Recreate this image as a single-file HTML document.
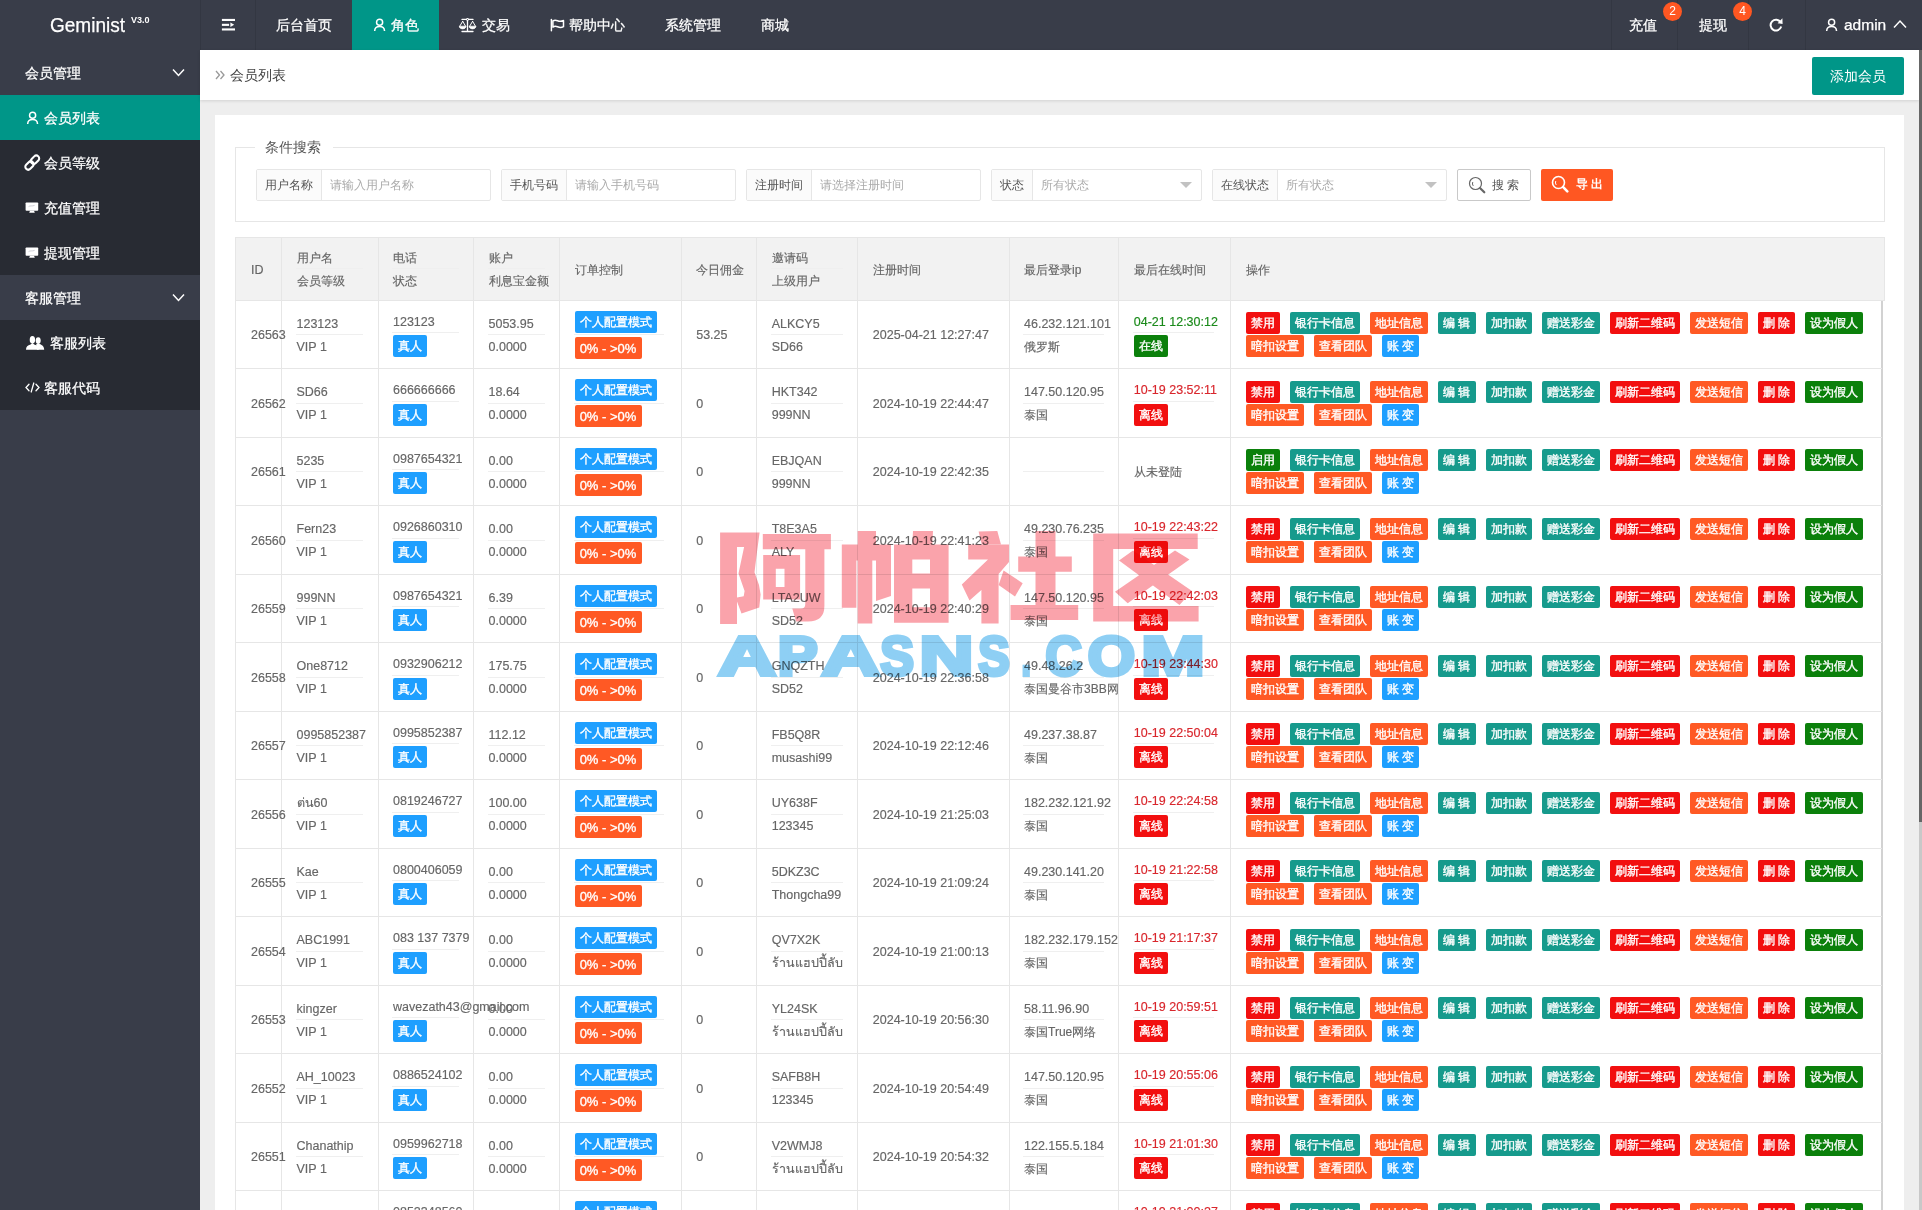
<!DOCTYPE html><html><head><meta charset="utf-8"><title>会员列表</title><style>
*{box-sizing:border-box;margin:0;padding:0}
html,body{width:1922px;height:1210px;overflow:hidden}
body{position:relative;background:#eeeeee;font-family:"Liberation Sans",sans-serif;font-size:12px;color:#666;line-height:20px}
.abs{position:absolute}
.nw{white-space:nowrap;overflow:visible}
#hdr{position:absolute;left:0;top:0;width:1922px;height:50px;background:#393D49;color:#fff}
#hdr .it{-webkit-text-stroke:.25px #fff;position:absolute;top:0;height:50px;line-height:50px;font-size:14px;color:#fff;white-space:nowrap}
#hdr .sep{position:absolute;top:0;width:1px;height:50px;background:rgba(0,0,0,.09)}
#side{position:absolute;left:0;top:50px;width:200px;height:1160px;background:#393D49}
#side .p{-webkit-text-stroke:.25px #fff;position:absolute;left:0;width:200px;height:45px;line-height:46px;color:#fff;font-size:14px;padding-left:25px;background:#393D49;white-space:nowrap}
#side .c{-webkit-text-stroke:.25px #fff;position:absolute;left:0;width:200px;height:45px;line-height:46px;color:#fff;font-size:14px;background:#282B33;white-space:nowrap}
#side .c span{position:absolute;top:0}
#side .act{background:#009688}
#side svg{position:absolute}
#crumb{position:absolute;left:200px;top:50px;width:1719px;height:50px;background:#fff;box-shadow:0 1px 3px rgba(0,0,0,.12)}
#card{position:absolute;left:215px;top:115px;width:1689px;height:1100px;background:#fff}
.grp{position:absolute;top:169px;height:32px;border:1px solid #e6e6e6;border-radius:2px;background:#fff}
.grp .lb{position:absolute;left:0;top:0;height:30px;line-height:31px;background:#FBFBFB;border-right:1px solid #e6e6e6;color:#555;font-size:12px;text-align:center;white-space:nowrap;overflow:hidden}
.grp .ph{position:absolute;top:0;height:30px;line-height:31px;color:#ababab;font-size:12px;white-space:nowrap}
.grp .car{position:absolute;top:12px;width:0;height:0;border:6px solid transparent;border-top-color:#c2c2c2}
#thead{position:absolute;left:235px;top:237px;width:1650px;height:64px;background:#f2f2f2;border:1px solid #e6e6e6}
.vl{position:absolute;width:1px;background:#e6e6e6}
.hl{position:absolute;height:1px;background:#e6e6e6}
.t{position:absolute;height:20px;line-height:20px;white-space:nowrap;color:#666;-webkit-text-stroke:.15px currentColor}
.n{font-size:12.5px}
.hr{position:absolute;height:1px;background:#efefef}
.b{position:absolute;height:22px;line-height:23px;-webkit-text-stroke:.35px #fff;border-radius:2px;color:#fff;font-size:12px;text-align:center;white-space:nowrap;overflow:hidden}
.red{background:#F20F0F}.teal{background:#169A8C}.org{background:#FF5924}.blue{background:#1E9FFF}.grn{background:#0B800B}
.tg{color:#1a8a1a}.tr{color:#d9262c}
</style></head><body>
<div id="hdr">
<div class="it" style="left:50px;font-size:20px;transform:scaleX(.95);transform-origin:0 50%">Geminist</div>
<div class="abs" style="left:131px;top:14px;font-size:9px;line-height:12px;font-weight:bold;color:#fff">V3.0</div>
<div class="sep" style="left:200px"></div>
<div class="sep" style="left:255px"></div>
<div class="sep" style="left:1611px"></div>
<div class="sep" style="left:1677px"></div>
<div class="sep" style="left:1748px"></div>
<div class="sep" style="left:1805px"></div>
<svg class="abs" style="left:221px;top:18px" width="15" height="13" viewBox="0 0 15 13"><g fill="#fff"><rect x="0.9" y="0.9" width="13.1" height="2.1"/><rect x="0.9" y="5.8" width="7.2" height="2.1"/><rect x="0.9" y="10.4" width="13.1" height="2.1"/><path d="M9.4 4.6L13.2 6.85L9.4 9.1Z"/></g></svg>
<div class="it" style="left:276px">后台首页</div>
<div class="abs" style="left:352px;top:0;width:87px;height:50px;background:#009688"></div>
<svg class="abs" style="left:372.5px;top:17px" width="13" height="14" viewBox="0 0 13 14"><g stroke="#fff" stroke-width="1.5" fill="none" stroke-linecap="round"><circle cx="6.6" cy="5.3" r="3.05"/><path d="M1.7 13.6C1.9 10.8 3.9 9.6 6.6 9.6S11.3 10.8 11.5 13.6"/></g></svg>
<div class="it" style="left:391px">角色</div>
<svg class="abs" style="left:458px;top:18px" width="19" height="15" viewBox="0 0 19 15"><g stroke="#fff" fill="none" stroke-linecap="round" stroke-linejoin="miter"><path d="M4 1.4H15M9.5 1.4V13.5M4 13.5H15" stroke-width="1.3"/><path d="M4.7 3.3L1.7 8.3M4.7 3.3L7.6 8.3M14.6 3.3L11.6 8.3M14.6 3.3L17.5 8.3" stroke-width="1"/><path d="M1.4 8.7C1.8 11.6 7.5 11.6 7.9 8.7ZM11.3 8.7C11.7 11.6 17.4 11.6 17.8 8.7Z" stroke-width="1" fill="#fff"/></g><circle cx="9.5" cy="1.4" r="1.3" fill="#fff"/><circle cx="9.5" cy="1.4" r="0.5" fill="#393D49"/></svg>
<div class="it" style="left:482px">交易</div>
<svg class="abs" style="left:549px;top:17px" width="17" height="16" viewBox="0 0 17 16"><g stroke="#fff" stroke-width="1.5" fill="none" stroke-linejoin="round" stroke-linecap="round"><path d="M2.4 2.6V13.8"/><path d="M3.9 3.9C5.6 2.7 7 3 8.6 3.7S12.2 4.6 14.5 3.5V9.7C12.2 10.9 10.2 10.5 8.6 9.8S5.6 8.9 3.9 10.1Z"/></g></svg>
<div class="it" style="left:569px">帮助中心</div>
<div class="it" style="left:665px">系统管理</div>
<div class="it" style="left:761px">商城</div>
<div class="it" style="left:1629px">充值</div>
<div class="abs" style="left:1663px;top:2px;width:19px;height:19px;border-radius:10px;background:#FF5722;color:#fff;font-size:12px;line-height:19px;text-align:center">2</div>
<div class="it" style="left:1699px">提现</div>
<div class="abs" style="left:1733px;top:2px;width:19px;height:19px;border-radius:10px;background:#FF5722;color:#fff;font-size:12px;line-height:19px;text-align:center">4</div>
<svg class="abs" style="left:1768px;top:17px" width="16" height="16" viewBox="0 0 16 16"><path d="M12.6 5.3A5.4 5.4 0 1 0 13.2 9.6" stroke="#fff" stroke-width="2" fill="none"/><path d="M9.6 6.2L14.4 1.2L14.6 7.1Z" fill="#fff"/></svg>
<svg class="abs" style="left:1825.3px;top:17px" width="13" height="14" viewBox="0 0 13 14"><g stroke="#fff" stroke-width="1.5" fill="none" stroke-linecap="round"><circle cx="6.6" cy="5.3" r="3.05"/><path d="M1.7 13.6C1.9 10.8 3.9 9.6 6.6 9.6S11.3 10.8 11.5 13.6"/></g></svg>
<div class="it" style="left:1844px;font-size:15.5px">admin</div>
<svg class="abs" style="left:1893px;top:19px" width="14" height="10" viewBox="0 0 14 10"><path d="M1 8.5L7 2L13 8.5" stroke="#fff" stroke-width="1.5" fill="none"/></svg>
</div>
<div id="side">
<div class="p" style="top:0">会员管理<svg style="left:172px;top:18px" width="13" height="9" viewBox="0 0 13 9"><path d="M1 1.5L6.5 7.5L12 1.5" stroke="#fff" stroke-width="1.5" fill="none"/></svg></div>
<div class="c act" style="top:45px"><svg style="left:25.5px;top:15px" width="13" height="14" viewBox="0 0 13 14"><g stroke="#fff" stroke-width="1.5" fill="none" stroke-linecap="round"><circle cx="6.6" cy="5.3" r="3.05"/><path d="M1.7 13.6C1.9 10.8 3.9 9.6 6.6 9.6S11.3 10.8 11.5 13.6"/></g></svg><span style="left:44px">会员列表</span></div>
<div class="c" style="top:90px"><svg style="left:22px;top:12px" width="20" height="20" viewBox="22 12 20 20"><g stroke="#fff" stroke-width="2.1" fill="none"><rect x="-4.7" y="-2.9" width="9.4" height="5.8" rx="2.9" transform="translate(35,19.7) rotate(-45)"/><rect x="-4.7" y="-2.9" width="9.4" height="5.8" rx="2.9" transform="translate(29.5,25.5) rotate(-45)"/></g></svg><span style="left:44px">会员等级</span></div>
<div class="c" style="top:135px"><svg style="left:25px;top:17px" width="14" height="13" viewBox="0 0 14 13"><rect x="0.6" y="0.4" width="12.6" height="8.3" rx="0.8" fill="#fff"/><path d="M3.6 4.6C5 3.4 7 4.4 9.6 3.4" stroke="#c9cad0" stroke-width="0.9" fill="none"/><path d="M5 8.7H9L9.8 10.8H4.2Z" fill="#fff"/></svg><span style="left:44px">充值管理</span></div>
<div class="c" style="top:180px"><svg style="left:25px;top:17px" width="14" height="13" viewBox="0 0 14 13"><rect x="0.6" y="0.4" width="12.6" height="8.3" rx="0.8" fill="#fff"/><path d="M3.6 4.6C5 3.4 7 4.4 9.6 3.4" stroke="#c9cad0" stroke-width="0.9" fill="none"/><path d="M5 8.7H9L9.8 10.8H4.2Z" fill="#fff"/></svg><span style="left:44px">提现管理</span></div>
<div class="p" style="top:225px">客服管理<svg style="left:172px;top:18px" width="13" height="9" viewBox="0 0 13 9"><path d="M1 1.5L6.5 7.5L12 1.5" stroke="#fff" stroke-width="1.5" fill="none"/></svg></div>
<div class="c" style="top:270px"><svg style="left:25px;top:15px" width="20" height="16" viewBox="0 0 20 16"><g fill="#fff"><ellipse cx="13.2" cy="5.6" rx="2.5" ry="3.4"/><path d="M11 9.6L13.2 8.6C16.5 9.6 19 11 19.2 14.8H12Z"/><ellipse cx="7.4" cy="4.8" rx="2.7" ry="3.8"/><path d="M1 14.8C1 11.6 2.6 10.6 5.6 9.6L7.4 8L9.2 9.6C12.2 10.6 13.8 11.6 13.8 14.8Z"/></g></svg><span style="left:50px">客服列表</span></div>
<div class="c" style="top:315px"><svg style="left:25px;top:17px" width="15" height="11" viewBox="0 0 15 11"><g stroke="#fff" stroke-width="1.3" fill="none" stroke-linecap="round" stroke-linejoin="miter"><path d="M4 2.2L1 5.5L4 8.8M11 2.2L14 5.5L11 8.8M8.8 1L6.2 10"/></g></svg><span style="left:44px">客服代码</span></div>
</div>
<div id="crumb">
<svg class="abs" style="left:15px;top:20px" width="10" height="10" viewBox="0 0 10 10"><path d="M1 1L4.5 5L1 9M5.5 1L9 5L5.5 9" stroke="#999" stroke-width="1.3" fill="none"/></svg>
<div class="abs nw" style="left:30px;top:0;line-height:50px;font-size:14px;color:#444">会员列表</div>
<div class="abs" style="left:1612px;top:7px;width:92px;height:38px;line-height:38px;background:#009688;border-radius:2px;color:#fff;font-size:14px;text-align:center;white-space:nowrap;overflow:hidden">添加会员</div>
</div>
<div class="abs" style="left:1919px;top:50px;width:3px;height:772px;background:#666"></div><div class="abs" style="left:1919px;top:822px;width:3px;height:388px;background:#c8c8c8"></div>
<div id="card"></div>
<div class="abs" style="left:235px;top:147px;width:1650px;height:75px;border:1px solid #e6e6e6"></div>
<div class="abs nw" style="left:255px;top:137px;width:78px;height:20px;background:#fff;line-height:20px;font-size:14px;color:#555;padding-left:10px">条件搜索</div>
<div class="grp" style="left:256px;width:235px"><div class="lb" style="width:65px">用户名称</div><div class="ph" style="left:73px">请输入用户名称</div></div>
<div class="grp" style="left:501px;width:235px"><div class="lb" style="width:65px">手机号码</div><div class="ph" style="left:73px">请输入手机号码</div></div>
<div class="grp" style="left:746px;width:235px"><div class="lb" style="width:65px">注册时间</div><div class="ph" style="left:73px">请选择注册时间</div></div>
<div class="grp" style="left:991px;width:211px"><div class="lb" style="width:41px">状态</div><div class="ph" style="left:49px">所有状态</div><div class="car" style="left:188px"></div></div>
<div class="grp" style="left:1212px;width:235px"><div class="lb" style="width:65px">在线状态</div><div class="ph" style="left:73px">所有状态</div><div class="car" style="left:212px"></div></div>
<div class="abs" style="left:1457px;top:169px;width:74px;height:32px;border:1px solid #C9C9C9;border-radius:2px;background:#fff"></div>
<svg class="abs" style="left:1468px;top:176px" width="18" height="18" viewBox="0 0 18 18"><g stroke="#666" fill="none" stroke-linecap="round"><circle cx="7.5" cy="7.5" r="6" stroke-width="1.2"/><path d="M4.6 6.4A3.2 3.2 0 0 0 5 9.6" stroke-width="1"/><path d="M12.2 12.2L16.3 16.3" stroke-width="2.2"/></g></svg>
<div class="abs nw" style="left:1492px;top:169px;line-height:32px;font-size:12px;color:#555">搜 索</div>
<div class="abs" style="left:1541px;top:169px;width:72px;height:32px;border-radius:2px;background:#FF5722"></div>
<svg class="abs" style="left:1551px;top:175px" width="18" height="18" viewBox="0 0 18 18"><g stroke="#fff" fill="none" stroke-linecap="round"><circle cx="7.5" cy="7.5" r="6" stroke-width="1.6"/><path d="M4.6 6.4A3.2 3.2 0 0 0 5 9.6" stroke-width="1"/><path d="M12.2 12.2L16.3 16.3" stroke-width="2.6"/></g></svg>
<div class="abs nw" style="left:1576px;top:168px;line-height:32px;font-size:12px;color:#fff;font-weight:bold">导 出</div>
<div id="thead"></div>
<div class="vl" style="left:235px;top:301px;height:910px"></div>
<div class="vl" style="left:281.00px;top:238px;height:973px"></div>
<div class="vl" style="left:377.50px;top:238px;height:973px"></div>
<div class="vl" style="left:473.00px;top:238px;height:973px"></div>
<div class="vl" style="left:559.00px;top:238px;height:973px"></div>
<div class="vl" style="left:680.70px;top:238px;height:973px"></div>
<div class="vl" style="left:756.20px;top:238px;height:973px"></div>
<div class="vl" style="left:857.30px;top:238px;height:973px"></div>
<div class="vl" style="left:1008.50px;top:238px;height:973px"></div>
<div class="vl" style="left:1118.30px;top:238px;height:973px"></div>
<div class="vl" style="left:1230.00px;top:238px;height:973px"></div>
<div class="abs" style="left:1881px;top:301px;width:2px;height:910px;background:#d2d2d2"></div>
<div class="hl" style="left:235px;top:368.26px;width:1647px"></div>
<div class="hl" style="left:235px;top:436.77px;width:1647px"></div>
<div class="hl" style="left:235px;top:505.28px;width:1647px"></div>
<div class="hl" style="left:235px;top:573.79px;width:1647px"></div>
<div class="hl" style="left:235px;top:642.30px;width:1647px"></div>
<div class="hl" style="left:235px;top:710.81px;width:1647px"></div>
<div class="hl" style="left:235px;top:779.32px;width:1647px"></div>
<div class="hl" style="left:235px;top:847.83px;width:1647px"></div>
<div class="hl" style="left:235px;top:916.34px;width:1647px"></div>
<div class="hl" style="left:235px;top:984.85px;width:1647px"></div>
<div class="hl" style="left:235px;top:1053.36px;width:1647px"></div>
<div class="hl" style="left:235px;top:1121.87px;width:1647px"></div>
<div class="hl" style="left:235px;top:1190.38px;width:1647px"></div>
<div class="t n" style="left:251.0px;top:259.9px;">ID</div>
<div class="t " style="left:296.5px;top:247.6px;">用户名</div>
<div class="t " style="left:296.5px;top:270.9px;">会员等级</div>
<div class="hr" style="left:295.5px;top:268.2px;width:67.5px"></div>
<div class="t " style="left:393.0px;top:247.6px;">电话</div>
<div class="t " style="left:393.0px;top:270.9px;">状态</div>
<div class="hr" style="left:392.0px;top:268.2px;width:66.5px"></div>
<div class="t " style="left:488.5px;top:247.6px;">账户</div>
<div class="t " style="left:488.5px;top:270.9px;">利息宝金额</div>
<div class="hr" style="left:487.5px;top:268.2px;width:57.0px"></div>
<div class="t " style="left:771.7px;top:247.6px;">邀请码</div>
<div class="t " style="left:771.7px;top:270.9px;">上级用户</div>
<div class="hr" style="left:770.7px;top:268.2px;width:72.1px"></div>
<div class="t " style="left:574.5px;top:259.9px;">订单控制</div>
<div class="t " style="left:696.2px;top:259.9px;">今日佣金</div>
<div class="t " style="left:872.8px;top:259.9px;">注册时间</div>
<div class="t " style="left:1024.0px;top:259.9px;">最后登录ip</div>
<div class="t " style="left:1133.8px;top:259.9px;">最后在线时间</div>
<div class="t " style="left:1245.5px;top:259.9px;">操作</div>
<div class="t n" style="left:251.0px;top:325.3px;">26563</div>
<div class="t n" style="left:296.5px;top:313.7px;">123123</div>
<div class="hr" style="left:295.5px;top:334.1px;width:67.0px"></div>
<div class="t n" style="left:296.5px;top:336.7px;">VIP 1</div>
<div class="t n" style="left:393.0px;top:311.8px;">123123</div>
<div class="hr" style="left:392.0px;top:332.1px;width:67.0px"></div>
<div class="b blue" style="left:393.0px;top:335.3px;width:34.0px;">真人</div>
<div class="t n" style="left:488.5px;top:313.7px;">5053.95</div>
<div class="hr" style="left:487.5px;top:334.1px;width:57.0px"></div>
<div class="t n" style="left:488.5px;top:336.7px;">0.0000</div>
<div class="b blue" style="left:574.5px;top:310.5px;width:82.0px;">个人配置模式</div>
<div class="hr" style="left:573.5px;top:334.2px;width:90.0px"></div>
<div class="b org" style="left:574.5px;top:336.7px;width:67.0px;font-size:13px">0% - &gt;0%</div>
<div class="t n" style="left:696.2px;top:325.3px;">53.25</div>
<div class="t n" style="left:771.7px;top:313.7px;">ALKCY5</div>
<div class="hr" style="left:770.7px;top:334.1px;width:72.0px"></div>
<div class="t n" style="left:771.7px;top:336.7px;max-width:84px;overflow:hidden">SD66</div>
<div class="t n" style="left:872.8px;top:325.3px;">2025-04-21 12:27:47</div>
<div class="t n" style="left:1024.0px;top:313.7px;">46.232.121.101</div>
<div class="hr" style="left:1023.0px;top:334.1px;width:81.0px"></div>
<div class="t " style="left:1024.0px;top:336.7px;">俄罗斯</div>
<div class="t n tg" style="left:1133.8px;top:311.8px;">04-21 12:30:12</div>
<div class="hr" style="left:1132.8px;top:332.1px;width:81.0px"></div>
<div class="b grn" style="left:1133.8px;top:335.3px;width:34.0px;">在线</div>
<div class="b red" style="left:1245.5px;top:312.0px;width:34.0px;">禁用</div>
<div class="b teal" style="left:1289.5px;top:312.0px;width:70.0px;">银行卡信息</div>
<div class="b org" style="left:1369.5px;top:312.0px;width:58.0px;">地址信息</div>
<div class="b teal" style="left:1437.5px;top:312.0px;width:38.6px;">编 辑</div>
<div class="b teal" style="left:1486.1px;top:312.0px;width:46.0px;">加扣款</div>
<div class="b teal" style="left:1542.1px;top:312.0px;width:58.0px;">赠送彩金</div>
<div class="b red" style="left:1610.1px;top:312.0px;width:70.0px;">刷新二维码</div>
<div class="b org" style="left:1690.1px;top:312.0px;width:58.0px;">发送短信</div>
<div class="b red" style="left:1758.1px;top:312.0px;width:36.6px;">删 除</div>
<div class="b grn" style="left:1804.7px;top:312.0px;width:58.0px;">设为假人</div>
<div class="b org" style="left:1245.5px;top:335.2px;width:58.0px;">暗扣设置</div>
<div class="b org" style="left:1313.5px;top:335.2px;width:58.0px;">查看团队</div>
<div class="b blue" style="left:1381.5px;top:335.2px;width:37.6px;">账 变</div>
<div class="t n" style="left:251.0px;top:393.8px;">26562</div>
<div class="t n" style="left:296.5px;top:382.2px;">SD66</div>
<div class="hr" style="left:295.5px;top:402.6px;width:67.0px"></div>
<div class="t n" style="left:296.5px;top:405.2px;">VIP 1</div>
<div class="t n" style="left:393.0px;top:380.3px;">666666666</div>
<div class="hr" style="left:392.0px;top:400.6px;width:67.0px"></div>
<div class="b blue" style="left:393.0px;top:403.8px;width:34.0px;">真人</div>
<div class="t n" style="left:488.5px;top:382.2px;">18.64</div>
<div class="hr" style="left:487.5px;top:402.6px;width:57.0px"></div>
<div class="t n" style="left:488.5px;top:405.2px;">0.0000</div>
<div class="b blue" style="left:574.5px;top:379.0px;width:82.0px;">个人配置模式</div>
<div class="hr" style="left:573.5px;top:402.7px;width:90.0px"></div>
<div class="b org" style="left:574.5px;top:405.2px;width:67.0px;font-size:13px">0% - &gt;0%</div>
<div class="t n" style="left:696.2px;top:393.8px;">0</div>
<div class="t n" style="left:771.7px;top:382.2px;">HKT342</div>
<div class="hr" style="left:770.7px;top:402.6px;width:72.0px"></div>
<div class="t n" style="left:771.7px;top:405.2px;max-width:84px;overflow:hidden">999NN</div>
<div class="t n" style="left:872.8px;top:393.8px;">2024-10-19 22:44:47</div>
<div class="t n" style="left:1024.0px;top:382.2px;">147.50.120.95</div>
<div class="hr" style="left:1023.0px;top:402.6px;width:81.0px"></div>
<div class="t " style="left:1024.0px;top:405.2px;">泰国</div>
<div class="t n tr" style="left:1133.8px;top:380.3px;">10-19 23:52:11</div>
<div class="hr" style="left:1132.8px;top:400.6px;width:81.0px"></div>
<div class="b red" style="left:1133.8px;top:403.8px;width:34.0px;">离线</div>
<div class="b red" style="left:1245.5px;top:380.5px;width:34.0px;">禁用</div>
<div class="b teal" style="left:1289.5px;top:380.5px;width:70.0px;">银行卡信息</div>
<div class="b org" style="left:1369.5px;top:380.5px;width:58.0px;">地址信息</div>
<div class="b teal" style="left:1437.5px;top:380.5px;width:38.6px;">编 辑</div>
<div class="b teal" style="left:1486.1px;top:380.5px;width:46.0px;">加扣款</div>
<div class="b teal" style="left:1542.1px;top:380.5px;width:58.0px;">赠送彩金</div>
<div class="b red" style="left:1610.1px;top:380.5px;width:70.0px;">刷新二维码</div>
<div class="b org" style="left:1690.1px;top:380.5px;width:58.0px;">发送短信</div>
<div class="b red" style="left:1758.1px;top:380.5px;width:36.6px;">删 除</div>
<div class="b grn" style="left:1804.7px;top:380.5px;width:58.0px;">设为假人</div>
<div class="b org" style="left:1245.5px;top:403.7px;width:58.0px;">暗扣设置</div>
<div class="b org" style="left:1313.5px;top:403.7px;width:58.0px;">查看团队</div>
<div class="b blue" style="left:1381.5px;top:403.7px;width:37.6px;">账 变</div>
<div class="t n" style="left:251.0px;top:462.3px;">26561</div>
<div class="t n" style="left:296.5px;top:450.7px;">5235</div>
<div class="hr" style="left:295.5px;top:471.1px;width:67.0px"></div>
<div class="t n" style="left:296.5px;top:473.7px;">VIP 1</div>
<div class="t n" style="left:393.0px;top:448.8px;">0987654321</div>
<div class="hr" style="left:392.0px;top:469.1px;width:67.0px"></div>
<div class="b blue" style="left:393.0px;top:472.3px;width:34.0px;">真人</div>
<div class="t n" style="left:488.5px;top:450.7px;">0.00</div>
<div class="hr" style="left:487.5px;top:471.1px;width:57.0px"></div>
<div class="t n" style="left:488.5px;top:473.7px;">0.0000</div>
<div class="b blue" style="left:574.5px;top:447.5px;width:82.0px;">个人配置模式</div>
<div class="hr" style="left:573.5px;top:471.2px;width:90.0px"></div>
<div class="b org" style="left:574.5px;top:473.7px;width:67.0px;font-size:13px">0% - &gt;0%</div>
<div class="t n" style="left:696.2px;top:462.3px;">0</div>
<div class="t n" style="left:771.7px;top:450.7px;">EBJQAN</div>
<div class="hr" style="left:770.7px;top:471.1px;width:72.0px"></div>
<div class="t n" style="left:771.7px;top:473.7px;max-width:84px;overflow:hidden">999NN</div>
<div class="t n" style="left:872.8px;top:462.3px;">2024-10-19 22:42:35</div>
<div class="hr" style="left:1023.0px;top:471.1px;width:81.0px"></div>
<div class="t " style="left:1133.8px;top:462.3px;">从未登陆</div>
<div class="b grn" style="left:1245.5px;top:449.0px;width:34.0px;">启用</div>
<div class="b teal" style="left:1289.5px;top:449.0px;width:70.0px;">银行卡信息</div>
<div class="b org" style="left:1369.5px;top:449.0px;width:58.0px;">地址信息</div>
<div class="b teal" style="left:1437.5px;top:449.0px;width:38.6px;">编 辑</div>
<div class="b teal" style="left:1486.1px;top:449.0px;width:46.0px;">加扣款</div>
<div class="b teal" style="left:1542.1px;top:449.0px;width:58.0px;">赠送彩金</div>
<div class="b red" style="left:1610.1px;top:449.0px;width:70.0px;">刷新二维码</div>
<div class="b org" style="left:1690.1px;top:449.0px;width:58.0px;">发送短信</div>
<div class="b red" style="left:1758.1px;top:449.0px;width:36.6px;">删 除</div>
<div class="b grn" style="left:1804.7px;top:449.0px;width:58.0px;">设为假人</div>
<div class="b org" style="left:1245.5px;top:472.2px;width:58.0px;">暗扣设置</div>
<div class="b org" style="left:1313.5px;top:472.2px;width:58.0px;">查看团队</div>
<div class="b blue" style="left:1381.5px;top:472.2px;width:37.6px;">账 变</div>
<div class="t n" style="left:251.0px;top:530.8px;">26560</div>
<div class="t n" style="left:296.5px;top:519.2px;">Fern23</div>
<div class="hr" style="left:295.5px;top:539.6px;width:67.0px"></div>
<div class="t n" style="left:296.5px;top:542.2px;">VIP 1</div>
<div class="t n" style="left:393.0px;top:517.3px;">0926860310</div>
<div class="hr" style="left:392.0px;top:537.6px;width:67.0px"></div>
<div class="b blue" style="left:393.0px;top:540.8px;width:34.0px;">真人</div>
<div class="t n" style="left:488.5px;top:519.2px;">0.00</div>
<div class="hr" style="left:487.5px;top:539.6px;width:57.0px"></div>
<div class="t n" style="left:488.5px;top:542.2px;">0.0000</div>
<div class="b blue" style="left:574.5px;top:516.0px;width:82.0px;">个人配置模式</div>
<div class="hr" style="left:573.5px;top:539.7px;width:90.0px"></div>
<div class="b org" style="left:574.5px;top:542.2px;width:67.0px;font-size:13px">0% - &gt;0%</div>
<div class="t n" style="left:696.2px;top:530.8px;">0</div>
<div class="t n" style="left:771.7px;top:519.2px;">T8E3A5</div>
<div class="hr" style="left:770.7px;top:539.6px;width:72.0px"></div>
<div class="t n" style="left:771.7px;top:542.2px;max-width:84px;overflow:hidden">ALY</div>
<div class="t n" style="left:872.8px;top:530.8px;">2024-10-19 22:41:23</div>
<div class="t n" style="left:1024.0px;top:519.2px;">49.230.76.235</div>
<div class="hr" style="left:1023.0px;top:539.6px;width:81.0px"></div>
<div class="t " style="left:1024.0px;top:542.2px;">泰国</div>
<div class="t n tr" style="left:1133.8px;top:517.3px;">10-19 22:43:22</div>
<div class="hr" style="left:1132.8px;top:537.6px;width:81.0px"></div>
<div class="b red" style="left:1133.8px;top:540.8px;width:34.0px;">离线</div>
<div class="b red" style="left:1245.5px;top:517.5px;width:34.0px;">禁用</div>
<div class="b teal" style="left:1289.5px;top:517.5px;width:70.0px;">银行卡信息</div>
<div class="b org" style="left:1369.5px;top:517.5px;width:58.0px;">地址信息</div>
<div class="b teal" style="left:1437.5px;top:517.5px;width:38.6px;">编 辑</div>
<div class="b teal" style="left:1486.1px;top:517.5px;width:46.0px;">加扣款</div>
<div class="b teal" style="left:1542.1px;top:517.5px;width:58.0px;">赠送彩金</div>
<div class="b red" style="left:1610.1px;top:517.5px;width:70.0px;">刷新二维码</div>
<div class="b org" style="left:1690.1px;top:517.5px;width:58.0px;">发送短信</div>
<div class="b red" style="left:1758.1px;top:517.5px;width:36.6px;">删 除</div>
<div class="b grn" style="left:1804.7px;top:517.5px;width:58.0px;">设为假人</div>
<div class="b org" style="left:1245.5px;top:540.7px;width:58.0px;">暗扣设置</div>
<div class="b org" style="left:1313.5px;top:540.7px;width:58.0px;">查看团队</div>
<div class="b blue" style="left:1381.5px;top:540.7px;width:37.6px;">账 变</div>
<div class="t n" style="left:251.0px;top:599.3px;">26559</div>
<div class="t n" style="left:296.5px;top:587.7px;">999NN</div>
<div class="hr" style="left:295.5px;top:608.1px;width:67.0px"></div>
<div class="t n" style="left:296.5px;top:610.7px;">VIP 1</div>
<div class="t n" style="left:393.0px;top:585.8px;">0987654321</div>
<div class="hr" style="left:392.0px;top:606.1px;width:67.0px"></div>
<div class="b blue" style="left:393.0px;top:609.3px;width:34.0px;">真人</div>
<div class="t n" style="left:488.5px;top:587.7px;">6.39</div>
<div class="hr" style="left:487.5px;top:608.1px;width:57.0px"></div>
<div class="t n" style="left:488.5px;top:610.7px;">0.0000</div>
<div class="b blue" style="left:574.5px;top:584.5px;width:82.0px;">个人配置模式</div>
<div class="hr" style="left:573.5px;top:608.2px;width:90.0px"></div>
<div class="b org" style="left:574.5px;top:610.7px;width:67.0px;font-size:13px">0% - &gt;0%</div>
<div class="t n" style="left:696.2px;top:599.3px;">0</div>
<div class="t n" style="left:771.7px;top:587.7px;">LTA2UW</div>
<div class="hr" style="left:770.7px;top:608.1px;width:72.0px"></div>
<div class="t n" style="left:771.7px;top:610.7px;max-width:84px;overflow:hidden">SD52</div>
<div class="t n" style="left:872.8px;top:599.3px;">2024-10-19 22:40:29</div>
<div class="t n" style="left:1024.0px;top:587.7px;">147.50.120.95</div>
<div class="hr" style="left:1023.0px;top:608.1px;width:81.0px"></div>
<div class="t " style="left:1024.0px;top:610.7px;">泰国</div>
<div class="t n tr" style="left:1133.8px;top:585.8px;">10-19 22:42:03</div>
<div class="hr" style="left:1132.8px;top:606.1px;width:81.0px"></div>
<div class="b red" style="left:1133.8px;top:609.3px;width:34.0px;">离线</div>
<div class="b red" style="left:1245.5px;top:586.0px;width:34.0px;">禁用</div>
<div class="b teal" style="left:1289.5px;top:586.0px;width:70.0px;">银行卡信息</div>
<div class="b org" style="left:1369.5px;top:586.0px;width:58.0px;">地址信息</div>
<div class="b teal" style="left:1437.5px;top:586.0px;width:38.6px;">编 辑</div>
<div class="b teal" style="left:1486.1px;top:586.0px;width:46.0px;">加扣款</div>
<div class="b teal" style="left:1542.1px;top:586.0px;width:58.0px;">赠送彩金</div>
<div class="b red" style="left:1610.1px;top:586.0px;width:70.0px;">刷新二维码</div>
<div class="b org" style="left:1690.1px;top:586.0px;width:58.0px;">发送短信</div>
<div class="b red" style="left:1758.1px;top:586.0px;width:36.6px;">删 除</div>
<div class="b grn" style="left:1804.7px;top:586.0px;width:58.0px;">设为假人</div>
<div class="b org" style="left:1245.5px;top:609.2px;width:58.0px;">暗扣设置</div>
<div class="b org" style="left:1313.5px;top:609.2px;width:58.0px;">查看团队</div>
<div class="b blue" style="left:1381.5px;top:609.2px;width:37.6px;">账 变</div>
<div class="t n" style="left:251.0px;top:667.8px;">26558</div>
<div class="t n" style="left:296.5px;top:656.2px;">One8712</div>
<div class="hr" style="left:295.5px;top:676.6px;width:67.0px"></div>
<div class="t n" style="left:296.5px;top:679.2px;">VIP 1</div>
<div class="t n" style="left:393.0px;top:654.3px;">0932906212</div>
<div class="hr" style="left:392.0px;top:674.6px;width:67.0px"></div>
<div class="b blue" style="left:393.0px;top:677.8px;width:34.0px;">真人</div>
<div class="t n" style="left:488.5px;top:656.2px;">175.75</div>
<div class="hr" style="left:487.5px;top:676.6px;width:57.0px"></div>
<div class="t n" style="left:488.5px;top:679.2px;">0.0000</div>
<div class="b blue" style="left:574.5px;top:653.0px;width:82.0px;">个人配置模式</div>
<div class="hr" style="left:573.5px;top:676.8px;width:90.0px"></div>
<div class="b org" style="left:574.5px;top:679.2px;width:67.0px;font-size:13px">0% - &gt;0%</div>
<div class="t n" style="left:696.2px;top:667.8px;">0</div>
<div class="t n" style="left:771.7px;top:656.2px;">GNQZTH</div>
<div class="hr" style="left:770.7px;top:676.6px;width:72.0px"></div>
<div class="t n" style="left:771.7px;top:679.2px;max-width:84px;overflow:hidden">SD52</div>
<div class="t n" style="left:872.8px;top:667.8px;">2024-10-19 22:36:58</div>
<div class="t n" style="left:1024.0px;top:656.2px;">49.48.26.2</div>
<div class="hr" style="left:1023.0px;top:676.6px;width:81.0px"></div>
<div class="t " style="left:1024.0px;top:679.2px;">泰国曼谷市3BB网</div>
<div class="t n tr" style="left:1133.8px;top:654.3px;">10-19 23:44:30</div>
<div class="hr" style="left:1132.8px;top:674.6px;width:81.0px"></div>
<div class="b red" style="left:1133.8px;top:677.8px;width:34.0px;">离线</div>
<div class="b red" style="left:1245.5px;top:654.5px;width:34.0px;">禁用</div>
<div class="b teal" style="left:1289.5px;top:654.5px;width:70.0px;">银行卡信息</div>
<div class="b org" style="left:1369.5px;top:654.5px;width:58.0px;">地址信息</div>
<div class="b teal" style="left:1437.5px;top:654.5px;width:38.6px;">编 辑</div>
<div class="b teal" style="left:1486.1px;top:654.5px;width:46.0px;">加扣款</div>
<div class="b teal" style="left:1542.1px;top:654.5px;width:58.0px;">赠送彩金</div>
<div class="b red" style="left:1610.1px;top:654.5px;width:70.0px;">刷新二维码</div>
<div class="b org" style="left:1690.1px;top:654.5px;width:58.0px;">发送短信</div>
<div class="b red" style="left:1758.1px;top:654.5px;width:36.6px;">删 除</div>
<div class="b grn" style="left:1804.7px;top:654.5px;width:58.0px;">设为假人</div>
<div class="b org" style="left:1245.5px;top:677.8px;width:58.0px;">暗扣设置</div>
<div class="b org" style="left:1313.5px;top:677.8px;width:58.0px;">查看团队</div>
<div class="b blue" style="left:1381.5px;top:677.8px;width:37.6px;">账 变</div>
<div class="t n" style="left:251.0px;top:736.4px;">26557</div>
<div class="t n" style="left:296.5px;top:724.8px;">0995852387</div>
<div class="hr" style="left:295.5px;top:745.2px;width:67.0px"></div>
<div class="t n" style="left:296.5px;top:747.8px;">VIP 1</div>
<div class="t n" style="left:393.0px;top:722.9px;">0995852387</div>
<div class="hr" style="left:392.0px;top:743.2px;width:67.0px"></div>
<div class="b blue" style="left:393.0px;top:746.4px;width:34.0px;">真人</div>
<div class="t n" style="left:488.5px;top:724.8px;">112.12</div>
<div class="hr" style="left:487.5px;top:745.2px;width:57.0px"></div>
<div class="t n" style="left:488.5px;top:747.8px;">0.0000</div>
<div class="b blue" style="left:574.5px;top:721.6px;width:82.0px;">个人配置模式</div>
<div class="hr" style="left:573.5px;top:745.3px;width:90.0px"></div>
<div class="b org" style="left:574.5px;top:747.8px;width:67.0px;font-size:13px">0% - &gt;0%</div>
<div class="t n" style="left:696.2px;top:736.4px;">0</div>
<div class="t n" style="left:771.7px;top:724.8px;">FB5Q8R</div>
<div class="hr" style="left:770.7px;top:745.2px;width:72.0px"></div>
<div class="t n" style="left:771.7px;top:747.8px;max-width:84px;overflow:hidden">musashi99</div>
<div class="t n" style="left:872.8px;top:736.4px;">2024-10-19 22:12:46</div>
<div class="t n" style="left:1024.0px;top:724.8px;">49.237.38.87</div>
<div class="hr" style="left:1023.0px;top:745.2px;width:81.0px"></div>
<div class="t " style="left:1024.0px;top:747.8px;">泰国</div>
<div class="t n tr" style="left:1133.8px;top:722.9px;">10-19 22:50:04</div>
<div class="hr" style="left:1132.8px;top:743.2px;width:81.0px"></div>
<div class="b red" style="left:1133.8px;top:746.4px;width:34.0px;">离线</div>
<div class="b red" style="left:1245.5px;top:723.1px;width:34.0px;">禁用</div>
<div class="b teal" style="left:1289.5px;top:723.1px;width:70.0px;">银行卡信息</div>
<div class="b org" style="left:1369.5px;top:723.1px;width:58.0px;">地址信息</div>
<div class="b teal" style="left:1437.5px;top:723.1px;width:38.6px;">编 辑</div>
<div class="b teal" style="left:1486.1px;top:723.1px;width:46.0px;">加扣款</div>
<div class="b teal" style="left:1542.1px;top:723.1px;width:58.0px;">赠送彩金</div>
<div class="b red" style="left:1610.1px;top:723.1px;width:70.0px;">刷新二维码</div>
<div class="b org" style="left:1690.1px;top:723.1px;width:58.0px;">发送短信</div>
<div class="b red" style="left:1758.1px;top:723.1px;width:36.6px;">删 除</div>
<div class="b grn" style="left:1804.7px;top:723.1px;width:58.0px;">设为假人</div>
<div class="b org" style="left:1245.5px;top:746.3px;width:58.0px;">暗扣设置</div>
<div class="b org" style="left:1313.5px;top:746.3px;width:58.0px;">查看团队</div>
<div class="b blue" style="left:1381.5px;top:746.3px;width:37.6px;">账 变</div>
<div class="t n" style="left:251.0px;top:804.9px;">26556</div>
<div class="t n" style="left:296.5px;top:793.3px;">ต่น60</div>
<div class="hr" style="left:295.5px;top:813.7px;width:67.0px"></div>
<div class="t n" style="left:296.5px;top:816.3px;">VIP 1</div>
<div class="t n" style="left:393.0px;top:791.4px;">0819246727</div>
<div class="hr" style="left:392.0px;top:811.7px;width:67.0px"></div>
<div class="b blue" style="left:393.0px;top:814.9px;width:34.0px;">真人</div>
<div class="t n" style="left:488.5px;top:793.3px;">100.00</div>
<div class="hr" style="left:487.5px;top:813.7px;width:57.0px"></div>
<div class="t n" style="left:488.5px;top:816.3px;">0.0000</div>
<div class="b blue" style="left:574.5px;top:790.1px;width:82.0px;">个人配置模式</div>
<div class="hr" style="left:573.5px;top:813.8px;width:90.0px"></div>
<div class="b org" style="left:574.5px;top:816.3px;width:67.0px;font-size:13px">0% - &gt;0%</div>
<div class="t n" style="left:696.2px;top:804.9px;">0</div>
<div class="t n" style="left:771.7px;top:793.3px;">UY638F</div>
<div class="hr" style="left:770.7px;top:813.7px;width:72.0px"></div>
<div class="t n" style="left:771.7px;top:816.3px;max-width:84px;overflow:hidden">123345</div>
<div class="t n" style="left:872.8px;top:804.9px;">2024-10-19 21:25:03</div>
<div class="t n" style="left:1024.0px;top:793.3px;">182.232.121.92</div>
<div class="hr" style="left:1023.0px;top:813.7px;width:81.0px"></div>
<div class="t " style="left:1024.0px;top:816.3px;">泰国</div>
<div class="t n tr" style="left:1133.8px;top:791.4px;">10-19 22:24:58</div>
<div class="hr" style="left:1132.8px;top:811.7px;width:81.0px"></div>
<div class="b red" style="left:1133.8px;top:814.9px;width:34.0px;">离线</div>
<div class="b red" style="left:1245.5px;top:791.6px;width:34.0px;">禁用</div>
<div class="b teal" style="left:1289.5px;top:791.6px;width:70.0px;">银行卡信息</div>
<div class="b org" style="left:1369.5px;top:791.6px;width:58.0px;">地址信息</div>
<div class="b teal" style="left:1437.5px;top:791.6px;width:38.6px;">编 辑</div>
<div class="b teal" style="left:1486.1px;top:791.6px;width:46.0px;">加扣款</div>
<div class="b teal" style="left:1542.1px;top:791.6px;width:58.0px;">赠送彩金</div>
<div class="b red" style="left:1610.1px;top:791.6px;width:70.0px;">刷新二维码</div>
<div class="b org" style="left:1690.1px;top:791.6px;width:58.0px;">发送短信</div>
<div class="b red" style="left:1758.1px;top:791.6px;width:36.6px;">删 除</div>
<div class="b grn" style="left:1804.7px;top:791.6px;width:58.0px;">设为假人</div>
<div class="b org" style="left:1245.5px;top:814.8px;width:58.0px;">暗扣设置</div>
<div class="b org" style="left:1313.5px;top:814.8px;width:58.0px;">查看团队</div>
<div class="b blue" style="left:1381.5px;top:814.8px;width:37.6px;">账 变</div>
<div class="t n" style="left:251.0px;top:873.4px;">26555</div>
<div class="t n" style="left:296.5px;top:861.8px;">Kae</div>
<div class="hr" style="left:295.5px;top:882.2px;width:67.0px"></div>
<div class="t n" style="left:296.5px;top:884.8px;">VIP 1</div>
<div class="t n" style="left:393.0px;top:859.9px;">0800406059</div>
<div class="hr" style="left:392.0px;top:880.2px;width:67.0px"></div>
<div class="b blue" style="left:393.0px;top:883.4px;width:34.0px;">真人</div>
<div class="t n" style="left:488.5px;top:861.8px;">0.00</div>
<div class="hr" style="left:487.5px;top:882.2px;width:57.0px"></div>
<div class="t n" style="left:488.5px;top:884.8px;">0.0000</div>
<div class="b blue" style="left:574.5px;top:858.6px;width:82.0px;">个人配置模式</div>
<div class="hr" style="left:573.5px;top:882.3px;width:90.0px"></div>
<div class="b org" style="left:574.5px;top:884.8px;width:67.0px;font-size:13px">0% - &gt;0%</div>
<div class="t n" style="left:696.2px;top:873.4px;">0</div>
<div class="t n" style="left:771.7px;top:861.8px;">5DKZ3C</div>
<div class="hr" style="left:770.7px;top:882.2px;width:72.0px"></div>
<div class="t n" style="left:771.7px;top:884.8px;max-width:84px;overflow:hidden">Thongcha99</div>
<div class="t n" style="left:872.8px;top:873.4px;">2024-10-19 21:09:24</div>
<div class="t n" style="left:1024.0px;top:861.8px;">49.230.141.20</div>
<div class="hr" style="left:1023.0px;top:882.2px;width:81.0px"></div>
<div class="t " style="left:1024.0px;top:884.8px;">泰国</div>
<div class="t n tr" style="left:1133.8px;top:859.9px;">10-19 21:22:58</div>
<div class="hr" style="left:1132.8px;top:880.2px;width:81.0px"></div>
<div class="b red" style="left:1133.8px;top:883.4px;width:34.0px;">离线</div>
<div class="b red" style="left:1245.5px;top:860.1px;width:34.0px;">禁用</div>
<div class="b teal" style="left:1289.5px;top:860.1px;width:70.0px;">银行卡信息</div>
<div class="b org" style="left:1369.5px;top:860.1px;width:58.0px;">地址信息</div>
<div class="b teal" style="left:1437.5px;top:860.1px;width:38.6px;">编 辑</div>
<div class="b teal" style="left:1486.1px;top:860.1px;width:46.0px;">加扣款</div>
<div class="b teal" style="left:1542.1px;top:860.1px;width:58.0px;">赠送彩金</div>
<div class="b red" style="left:1610.1px;top:860.1px;width:70.0px;">刷新二维码</div>
<div class="b org" style="left:1690.1px;top:860.1px;width:58.0px;">发送短信</div>
<div class="b red" style="left:1758.1px;top:860.1px;width:36.6px;">删 除</div>
<div class="b grn" style="left:1804.7px;top:860.1px;width:58.0px;">设为假人</div>
<div class="b org" style="left:1245.5px;top:883.3px;width:58.0px;">暗扣设置</div>
<div class="b org" style="left:1313.5px;top:883.3px;width:58.0px;">查看团队</div>
<div class="b blue" style="left:1381.5px;top:883.3px;width:37.6px;">账 变</div>
<div class="t n" style="left:251.0px;top:941.9px;">26554</div>
<div class="t n" style="left:296.5px;top:930.3px;">ABC1991</div>
<div class="hr" style="left:295.5px;top:950.7px;width:67.0px"></div>
<div class="t n" style="left:296.5px;top:953.3px;">VIP 1</div>
<div class="t n" style="left:393.0px;top:928.4px;">083 137 7379</div>
<div class="hr" style="left:392.0px;top:948.7px;width:67.0px"></div>
<div class="b blue" style="left:393.0px;top:951.9px;width:34.0px;">真人</div>
<div class="t n" style="left:488.5px;top:930.3px;">0.00</div>
<div class="hr" style="left:487.5px;top:950.7px;width:57.0px"></div>
<div class="t n" style="left:488.5px;top:953.3px;">0.0000</div>
<div class="b blue" style="left:574.5px;top:927.1px;width:82.0px;">个人配置模式</div>
<div class="hr" style="left:573.5px;top:950.8px;width:90.0px"></div>
<div class="b org" style="left:574.5px;top:953.3px;width:67.0px;font-size:13px">0% - &gt;0%</div>
<div class="t n" style="left:696.2px;top:941.9px;">0</div>
<div class="t n" style="left:771.7px;top:930.3px;">QV7X2K</div>
<div class="hr" style="left:770.7px;top:950.7px;width:72.0px"></div>
<div class="t n" style="left:771.7px;top:953.3px;max-width:84px;overflow:hidden">ร้านแฮปปี้ลับ</div>
<div class="t n" style="left:872.8px;top:941.9px;">2024-10-19 21:00:13</div>
<div class="t n" style="left:1024.0px;top:930.3px;">182.232.179.152</div>
<div class="hr" style="left:1023.0px;top:950.7px;width:81.0px"></div>
<div class="t " style="left:1024.0px;top:953.3px;">泰国</div>
<div class="t n tr" style="left:1133.8px;top:928.4px;">10-19 21:17:37</div>
<div class="hr" style="left:1132.8px;top:948.7px;width:81.0px"></div>
<div class="b red" style="left:1133.8px;top:951.9px;width:34.0px;">离线</div>
<div class="b red" style="left:1245.5px;top:928.6px;width:34.0px;">禁用</div>
<div class="b teal" style="left:1289.5px;top:928.6px;width:70.0px;">银行卡信息</div>
<div class="b org" style="left:1369.5px;top:928.6px;width:58.0px;">地址信息</div>
<div class="b teal" style="left:1437.5px;top:928.6px;width:38.6px;">编 辑</div>
<div class="b teal" style="left:1486.1px;top:928.6px;width:46.0px;">加扣款</div>
<div class="b teal" style="left:1542.1px;top:928.6px;width:58.0px;">赠送彩金</div>
<div class="b red" style="left:1610.1px;top:928.6px;width:70.0px;">刷新二维码</div>
<div class="b org" style="left:1690.1px;top:928.6px;width:58.0px;">发送短信</div>
<div class="b red" style="left:1758.1px;top:928.6px;width:36.6px;">删 除</div>
<div class="b grn" style="left:1804.7px;top:928.6px;width:58.0px;">设为假人</div>
<div class="b org" style="left:1245.5px;top:951.8px;width:58.0px;">暗扣设置</div>
<div class="b org" style="left:1313.5px;top:951.8px;width:58.0px;">查看团队</div>
<div class="b blue" style="left:1381.5px;top:951.8px;width:37.6px;">账 变</div>
<div class="t n" style="left:251.0px;top:1010.4px;">26553</div>
<div class="t n" style="left:296.5px;top:998.8px;">kingzer</div>
<div class="hr" style="left:295.5px;top:1019.2px;width:67.0px"></div>
<div class="t n" style="left:296.5px;top:1021.8px;">VIP 1</div>
<div class="t n" style="left:393.0px;top:996.9px;">wavezath43@gmail.com</div>
<div class="hr" style="left:392.0px;top:1017.2px;width:67.0px"></div>
<div class="b blue" style="left:393.0px;top:1020.4px;width:34.0px;">真人</div>
<div class="t n" style="left:488.5px;top:998.8px;">0.00</div>
<div class="hr" style="left:487.5px;top:1019.2px;width:57.0px"></div>
<div class="t n" style="left:488.5px;top:1021.8px;">0.0000</div>
<div class="b blue" style="left:574.5px;top:995.6px;width:82.0px;">个人配置模式</div>
<div class="hr" style="left:573.5px;top:1019.3px;width:90.0px"></div>
<div class="b org" style="left:574.5px;top:1021.8px;width:67.0px;font-size:13px">0% - &gt;0%</div>
<div class="t n" style="left:696.2px;top:1010.4px;">0</div>
<div class="t n" style="left:771.7px;top:998.8px;">YL24SK</div>
<div class="hr" style="left:770.7px;top:1019.2px;width:72.0px"></div>
<div class="t n" style="left:771.7px;top:1021.8px;max-width:84px;overflow:hidden">ร้านแฮปปี้ลับ</div>
<div class="t n" style="left:872.8px;top:1010.4px;">2024-10-19 20:56:30</div>
<div class="t n" style="left:1024.0px;top:998.8px;">58.11.96.90</div>
<div class="hr" style="left:1023.0px;top:1019.2px;width:81.0px"></div>
<div class="t " style="left:1024.0px;top:1021.8px;">泰国True网络</div>
<div class="t n tr" style="left:1133.8px;top:996.9px;">10-19 20:59:51</div>
<div class="hr" style="left:1132.8px;top:1017.2px;width:81.0px"></div>
<div class="b red" style="left:1133.8px;top:1020.4px;width:34.0px;">离线</div>
<div class="b red" style="left:1245.5px;top:997.1px;width:34.0px;">禁用</div>
<div class="b teal" style="left:1289.5px;top:997.1px;width:70.0px;">银行卡信息</div>
<div class="b org" style="left:1369.5px;top:997.1px;width:58.0px;">地址信息</div>
<div class="b teal" style="left:1437.5px;top:997.1px;width:38.6px;">编 辑</div>
<div class="b teal" style="left:1486.1px;top:997.1px;width:46.0px;">加扣款</div>
<div class="b teal" style="left:1542.1px;top:997.1px;width:58.0px;">赠送彩金</div>
<div class="b red" style="left:1610.1px;top:997.1px;width:70.0px;">刷新二维码</div>
<div class="b org" style="left:1690.1px;top:997.1px;width:58.0px;">发送短信</div>
<div class="b red" style="left:1758.1px;top:997.1px;width:36.6px;">删 除</div>
<div class="b grn" style="left:1804.7px;top:997.1px;width:58.0px;">设为假人</div>
<div class="b org" style="left:1245.5px;top:1020.3px;width:58.0px;">暗扣设置</div>
<div class="b org" style="left:1313.5px;top:1020.3px;width:58.0px;">查看团队</div>
<div class="b blue" style="left:1381.5px;top:1020.3px;width:37.6px;">账 变</div>
<div class="t n" style="left:251.0px;top:1078.9px;">26552</div>
<div class="t n" style="left:296.5px;top:1067.3px;">AH_10023</div>
<div class="hr" style="left:295.5px;top:1087.7px;width:67.0px"></div>
<div class="t n" style="left:296.5px;top:1090.3px;">VIP 1</div>
<div class="t n" style="left:393.0px;top:1065.4px;">0886524102</div>
<div class="hr" style="left:392.0px;top:1085.7px;width:67.0px"></div>
<div class="b blue" style="left:393.0px;top:1088.9px;width:34.0px;">真人</div>
<div class="t n" style="left:488.5px;top:1067.3px;">0.00</div>
<div class="hr" style="left:487.5px;top:1087.7px;width:57.0px"></div>
<div class="t n" style="left:488.5px;top:1090.3px;">0.0000</div>
<div class="b blue" style="left:574.5px;top:1064.1px;width:82.0px;">个人配置模式</div>
<div class="hr" style="left:573.5px;top:1087.8px;width:90.0px"></div>
<div class="b org" style="left:574.5px;top:1090.3px;width:67.0px;font-size:13px">0% - &gt;0%</div>
<div class="t n" style="left:696.2px;top:1078.9px;">0</div>
<div class="t n" style="left:771.7px;top:1067.3px;">SAFB8H</div>
<div class="hr" style="left:770.7px;top:1087.7px;width:72.0px"></div>
<div class="t n" style="left:771.7px;top:1090.3px;max-width:84px;overflow:hidden">123345</div>
<div class="t n" style="left:872.8px;top:1078.9px;">2024-10-19 20:54:49</div>
<div class="t n" style="left:1024.0px;top:1067.3px;">147.50.120.95</div>
<div class="hr" style="left:1023.0px;top:1087.7px;width:81.0px"></div>
<div class="t " style="left:1024.0px;top:1090.3px;">泰国</div>
<div class="t n tr" style="left:1133.8px;top:1065.4px;">10-19 20:55:06</div>
<div class="hr" style="left:1132.8px;top:1085.7px;width:81.0px"></div>
<div class="b red" style="left:1133.8px;top:1088.9px;width:34.0px;">离线</div>
<div class="b red" style="left:1245.5px;top:1065.6px;width:34.0px;">禁用</div>
<div class="b teal" style="left:1289.5px;top:1065.6px;width:70.0px;">银行卡信息</div>
<div class="b org" style="left:1369.5px;top:1065.6px;width:58.0px;">地址信息</div>
<div class="b teal" style="left:1437.5px;top:1065.6px;width:38.6px;">编 辑</div>
<div class="b teal" style="left:1486.1px;top:1065.6px;width:46.0px;">加扣款</div>
<div class="b teal" style="left:1542.1px;top:1065.6px;width:58.0px;">赠送彩金</div>
<div class="b red" style="left:1610.1px;top:1065.6px;width:70.0px;">刷新二维码</div>
<div class="b org" style="left:1690.1px;top:1065.6px;width:58.0px;">发送短信</div>
<div class="b red" style="left:1758.1px;top:1065.6px;width:36.6px;">删 除</div>
<div class="b grn" style="left:1804.7px;top:1065.6px;width:58.0px;">设为假人</div>
<div class="b org" style="left:1245.5px;top:1088.8px;width:58.0px;">暗扣设置</div>
<div class="b org" style="left:1313.5px;top:1088.8px;width:58.0px;">查看团队</div>
<div class="b blue" style="left:1381.5px;top:1088.8px;width:37.6px;">账 变</div>
<div class="t n" style="left:251.0px;top:1147.4px;">26551</div>
<div class="t n" style="left:296.5px;top:1135.8px;">Chanathip</div>
<div class="hr" style="left:295.5px;top:1156.2px;width:67.0px"></div>
<div class="t n" style="left:296.5px;top:1158.8px;">VIP 1</div>
<div class="t n" style="left:393.0px;top:1133.9px;">0959962718</div>
<div class="hr" style="left:392.0px;top:1154.2px;width:67.0px"></div>
<div class="b blue" style="left:393.0px;top:1157.4px;width:34.0px;">真人</div>
<div class="t n" style="left:488.5px;top:1135.8px;">0.00</div>
<div class="hr" style="left:487.5px;top:1156.2px;width:57.0px"></div>
<div class="t n" style="left:488.5px;top:1158.8px;">0.0000</div>
<div class="b blue" style="left:574.5px;top:1132.6px;width:82.0px;">个人配置模式</div>
<div class="hr" style="left:573.5px;top:1156.3px;width:90.0px"></div>
<div class="b org" style="left:574.5px;top:1158.8px;width:67.0px;font-size:13px">0% - &gt;0%</div>
<div class="t n" style="left:696.2px;top:1147.4px;">0</div>
<div class="t n" style="left:771.7px;top:1135.8px;">V2WMJ8</div>
<div class="hr" style="left:770.7px;top:1156.2px;width:72.0px"></div>
<div class="t n" style="left:771.7px;top:1158.8px;max-width:84px;overflow:hidden">ร้านแฮปปี้ลับ</div>
<div class="t n" style="left:872.8px;top:1147.4px;">2024-10-19 20:54:32</div>
<div class="t n" style="left:1024.0px;top:1135.8px;">122.155.5.184</div>
<div class="hr" style="left:1023.0px;top:1156.2px;width:81.0px"></div>
<div class="t " style="left:1024.0px;top:1158.8px;">泰国</div>
<div class="t n tr" style="left:1133.8px;top:1133.9px;">10-19 21:01:30</div>
<div class="hr" style="left:1132.8px;top:1154.2px;width:81.0px"></div>
<div class="b red" style="left:1133.8px;top:1157.4px;width:34.0px;">离线</div>
<div class="b red" style="left:1245.5px;top:1134.1px;width:34.0px;">禁用</div>
<div class="b teal" style="left:1289.5px;top:1134.1px;width:70.0px;">银行卡信息</div>
<div class="b org" style="left:1369.5px;top:1134.1px;width:58.0px;">地址信息</div>
<div class="b teal" style="left:1437.5px;top:1134.1px;width:38.6px;">编 辑</div>
<div class="b teal" style="left:1486.1px;top:1134.1px;width:46.0px;">加扣款</div>
<div class="b teal" style="left:1542.1px;top:1134.1px;width:58.0px;">赠送彩金</div>
<div class="b red" style="left:1610.1px;top:1134.1px;width:70.0px;">刷新二维码</div>
<div class="b org" style="left:1690.1px;top:1134.1px;width:58.0px;">发送短信</div>
<div class="b red" style="left:1758.1px;top:1134.1px;width:36.6px;">删 除</div>
<div class="b grn" style="left:1804.7px;top:1134.1px;width:58.0px;">设为假人</div>
<div class="b org" style="left:1245.5px;top:1157.3px;width:58.0px;">暗扣设置</div>
<div class="b org" style="left:1313.5px;top:1157.3px;width:58.0px;">查看团队</div>
<div class="b blue" style="left:1381.5px;top:1157.3px;width:37.6px;">账 变</div>
<div class="t n" style="left:393.0px;top:1202.4px;">0852348560</div>
<div class="hr" style="left:392.0px;top:1222.7px;width:67.0px"></div>
<div class="b blue" style="left:393.0px;top:1225.9px;width:34.0px;">真人</div>
<div class="b blue" style="left:574.5px;top:1201.1px;width:82.0px;">个人配置模式</div>
<div class="hr" style="left:573.5px;top:1224.8px;width:90.0px"></div>
<div class="b org" style="left:574.5px;top:1227.3px;width:67.0px;font-size:13px">0% - &gt;0%</div>
<div class="t n tr" style="left:1133.8px;top:1202.4px;">10-19 21:00:27</div>
<div class="hr" style="left:1132.8px;top:1222.7px;width:81.0px"></div>
<div class="b red" style="left:1133.8px;top:1225.9px;width:34.0px;">离线</div>
<div class="b red" style="left:1245.5px;top:1202.6px;width:34.0px;">禁用</div>
<div class="b teal" style="left:1289.5px;top:1202.6px;width:70.0px;">银行卡信息</div>
<div class="b org" style="left:1369.5px;top:1202.6px;width:58.0px;">地址信息</div>
<div class="b teal" style="left:1437.5px;top:1202.6px;width:38.6px;">编 辑</div>
<div class="b teal" style="left:1486.1px;top:1202.6px;width:46.0px;">加扣款</div>
<div class="b teal" style="left:1542.1px;top:1202.6px;width:58.0px;">赠送彩金</div>
<div class="b red" style="left:1610.1px;top:1202.6px;width:70.0px;">刷新二维码</div>
<div class="b org" style="left:1690.1px;top:1202.6px;width:58.0px;">发送短信</div>
<div class="b red" style="left:1758.1px;top:1202.6px;width:36.6px;">删 除</div>
<div class="b grn" style="left:1804.7px;top:1202.6px;width:58.0px;">设为假人</div>
<div class="b org" style="left:1245.5px;top:1225.8px;width:58.0px;">暗扣设置</div>
<div class="b org" style="left:1313.5px;top:1225.8px;width:58.0px;">查看团队</div>
<div class="b blue" style="left:1381.5px;top:1225.8px;width:37.6px;">账 变</div>
<svg class="abs" style="left:700px;top:520px;mix-blend-mode:multiply" width="520" height="170" viewBox="700 520 520 170">
<g fill="#FAA3AB">
<path fill-rule="evenodd" d="M720.1 532.4H759.6L757 552L754.5 572.3L759 585L760.6 594.4L759.3 607.5L741.5 613.5L737 601.4V624H720.1ZM737 547.1H744.1L738.5 573.6L744.6 591L743.7 596.2L737 597.5Z"/>
<path d="M762.8 534.1H830.9V549.3H762.8Z"/>
<path fill-rule="evenodd" d="M763.2 554.9H800.1V599.6H763.2ZM775.8 568.8V587H784.5V568.8Z"/>
<path d="M805.3 549H824.4V606Q824.4 621.5 808 621.5H796L792.3 608.5H801Q805.3 608.5 805.3 604Z"/>
<path fill-rule="evenodd" d="M841.8 544.5H857.7V531H876V544.5H891V596L876 601V560.5H872.3V623.6H857.7V560.5H856.4V607.7H841.8Z"/>
<path fill-rule="evenodd" d="M894 544.5H912.3L913 531H933L932.3 544.5H948.6V622.7H894ZM912.3 559.5V573.6H930V559.5ZM912.3 588.6V607.3H930V588.6Z"/>
<path d="M978.6 531.4L997.3 531L1001 544.5H981.8Z"/>
<path d="M968.2 544.5H1009V562L998.6 574V623.6H981.4V590L969.5 600.5L961.8 584.5L988 559.5H968.2Z"/>
<path d="M1003.6 570.5L1022.7 583.2L1015 596.4L998.6 585Z"/>
<path d="M1035.5 531H1055.5V556.4H1071.8V571.8H1055.5V605H1078.2V620H1010.5V605H1035.5V571.8H1018.2V556.4H1035.5Z"/>
<path d="M1093.2 533.6H1197.7V549H1113.2V606H1198.6V621.4H1093.2Z"/>
<path d="M1119 560.5L1133 550.5L1192 591L1179.5 605Z"/>
<path d="M1175 550.5L1189.5 559.5L1127.7 603.2L1115 591.8Z"/>
</g>
<g font-family="Liberation Sans, sans-serif" font-weight="bold" font-size="55.4" fill="#8ECFF4" stroke="#8ECFF4" stroke-width="4.0" stroke-linejoin="miter">
<text transform="translate(718.31,674.7) scale(1.4394,1)">A</text>
<text transform="translate(777.79,674.7) scale(1.0813,1)">P</text>
<text transform="translate(821.80,674.7) scale(1.4529,1)">A</text>
<text transform="translate(880.34,674.7) scale(0.9129,1)">S</text>
<text transform="translate(919.40,674.7) scale(1.3479,1)">N</text>
<text transform="translate(978.24,674.7) scale(0.8496,1)">S</text>
<text transform="translate(1021.39,674.7) scale(0.6141,1)">.</text>
<text transform="translate(1045.44,674.7) scale(0.9083,1)">C</text>
<text transform="translate(1087.70,674.7) scale(1.0989,1)">O</text>
<text transform="translate(1141.20,674.7) scale(1.3760,1)">M</text>
</g>
</svg>
</body></html>
